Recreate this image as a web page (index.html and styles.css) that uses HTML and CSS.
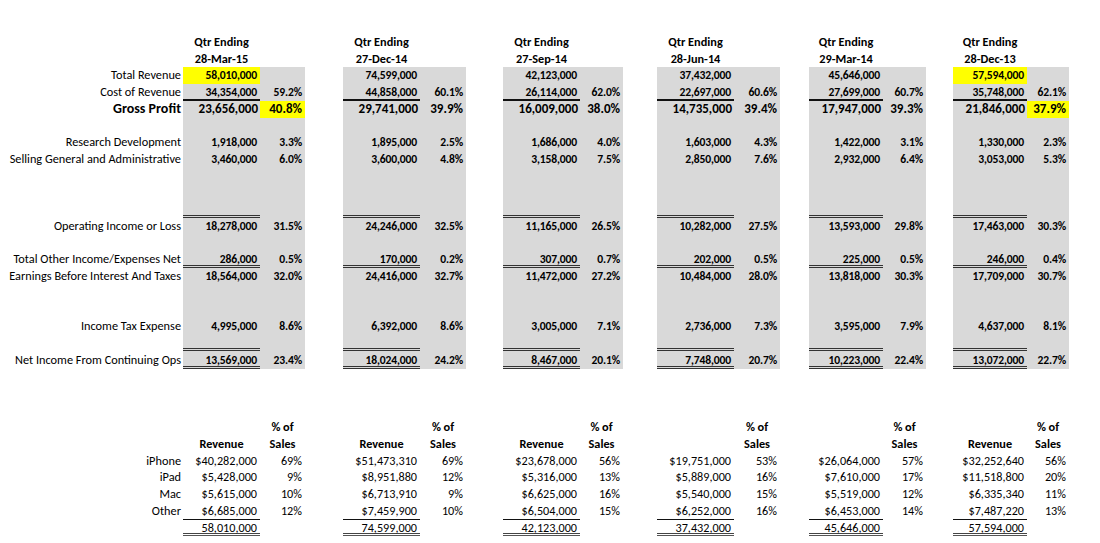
FILE: index.html
```html
<!DOCTYPE html>
<html lang="en">
<head>
<meta charset="utf-8">
<title>Quarterly Income Statement</title>
<link rel="stylesheet" href="styles.css">
</head>
<body>
<table class="sheet">
<colgroup>
<col class="c-lbl">
<col class="c-v"><col class="c-p1"><col class="c-g1">
<col class="c-v"><col class="c-p2"><col class="c-g2">
<col class="c-v"><col class="c-p3"><col class="c-g3">
<col class="c-v"><col class="c-p2"><col class="c-g4">
<col class="c-v5"><col class="c-p3"><col class="c-g5">
<col class="c-v5"><col class="c-p6">
</colgroup>
<tbody>
<tr><td></td><td class="hd">Qtr Ending</td><td></td><td></td><td class="hd">Qtr Ending</td><td></td><td></td><td class="hd">Qtr Ending</td><td></td><td></td><td class="hd">Qtr Ending</td><td></td><td></td><td class="hd">Qtr Ending</td><td></td><td></td><td class="hd">Qtr Ending</td><td></td></tr>
<tr><td></td><td class="hd">28-Mar-15</td><td></td><td></td><td class="hd">27-Dec-14</td><td></td><td></td><td class="hd">27-Sep-14</td><td></td><td></td><td class="hd">28-Jun-14</td><td></td><td></td><td class="hd">29-Mar-14</td><td></td><td></td><td class="hd">28-Dec-13</td><td></td></tr>
<tr class="s"><td class="lbl">Total Revenue</td><td class="v hl">58,010,000</td><td class="p"></td><td></td><td class="v">74,599,000</td><td class="p"></td><td></td><td class="v">42,123,000</td><td class="p"></td><td></td><td class="v">37,432,000</td><td class="p"></td><td></td><td class="v">45,646,000</td><td class="p"></td><td></td><td class="v hl">57,594,000</td><td class="p"></td></tr>
<tr class="s"><td class="lbl">Cost of Revenue</td><td class="v ul">34,354,000</td><td class="p">59.2%</td><td></td><td class="v ul">44,858,000</td><td class="p">60.1%</td><td></td><td class="v ul">26,114,000</td><td class="p">62.0%</td><td></td><td class="v ul">22,697,000</td><td class="p">60.6%</td><td></td><td class="v ul">27,699,000</td><td class="p">60.7%</td><td></td><td class="v ul">35,748,000</td><td class="p">62.1%</td></tr>
<tr class="s big"><td class="lbl">Gross Profit</td><td class="v">23,656,000</td><td class="p hl">40.8%</td><td></td><td class="v">29,741,000</td><td class="p">39.9%</td><td></td><td class="v">16,009,000</td><td class="p">38.0%</td><td></td><td class="v">14,735,000</td><td class="p">39.4%</td><td></td><td class="v">17,947,000</td><td class="p">39.3%</td><td></td><td class="v">21,846,000</td><td class="p hl">37.9%</td></tr>
<tr class="s"><td class="lbl"></td><td class="v"></td><td class="p"></td><td></td><td class="v"></td><td class="p"></td><td></td><td class="v"></td><td class="p"></td><td></td><td class="v"></td><td class="p"></td><td></td><td class="v"></td><td class="p"></td><td></td><td class="v"></td><td class="p"></td></tr>
<tr class="s"><td class="lbl">Research Development</td><td class="v">1,918,000</td><td class="p">3.3%</td><td></td><td class="v">1,895,000</td><td class="p">2.5%</td><td></td><td class="v">1,686,000</td><td class="p">4.0%</td><td></td><td class="v">1,603,000</td><td class="p">4.3%</td><td></td><td class="v">1,422,000</td><td class="p">3.1%</td><td></td><td class="v">1,330,000</td><td class="p">2.3%</td></tr>
<tr class="s"><td class="lbl">Selling General and Administrative</td><td class="v">3,460,000</td><td class="p">6.0%</td><td></td><td class="v">3,600,000</td><td class="p">4.8%</td><td></td><td class="v">3,158,000</td><td class="p">7.5%</td><td></td><td class="v">2,850,000</td><td class="p">7.6%</td><td></td><td class="v">2,932,000</td><td class="p">6.4%</td><td></td><td class="v">3,053,000</td><td class="p">5.3%</td></tr>
<tr class="s"><td class="lbl"></td><td class="v"></td><td class="p"></td><td></td><td class="v"></td><td class="p"></td><td></td><td class="v"></td><td class="p"></td><td></td><td class="v"></td><td class="p"></td><td></td><td class="v"></td><td class="p"></td><td></td><td class="v"></td><td class="p"></td></tr>
<tr class="s"><td class="lbl"></td><td class="v"></td><td class="p"></td><td></td><td class="v"></td><td class="p"></td><td></td><td class="v"></td><td class="p"></td><td></td><td class="v"></td><td class="p"></td><td></td><td class="v"></td><td class="p"></td><td></td><td class="v"></td><td class="p"></td></tr>
<tr class="s"><td class="lbl"></td><td class="v dbl"></td><td class="p"></td><td></td><td class="v dbl"></td><td class="p"></td><td></td><td class="v dbl"></td><td class="p"></td><td></td><td class="v dbl"></td><td class="p"></td><td></td><td class="v dbl"></td><td class="p"></td><td></td><td class="v dbl"></td><td class="p"></td></tr>
<tr class="s"><td class="lbl">Operating Income or Loss</td><td class="v">18,278,000</td><td class="p">31.5%</td><td></td><td class="v">24,246,000</td><td class="p">32.5%</td><td></td><td class="v">11,165,000</td><td class="p">26.5%</td><td></td><td class="v">10,282,000</td><td class="p">27.5%</td><td></td><td class="v">13,593,000</td><td class="p">29.8%</td><td></td><td class="v">17,463,000</td><td class="p">30.3%</td></tr>
<tr class="s"><td class="lbl"></td><td class="v"></td><td class="p"></td><td></td><td class="v"></td><td class="p"></td><td></td><td class="v"></td><td class="p"></td><td></td><td class="v"></td><td class="p"></td><td></td><td class="v"></td><td class="p"></td><td></td><td class="v"></td><td class="p"></td></tr>
<tr class="s"><td class="lbl">Total Other Income/Expenses Net</td><td class="v dbl">286,000</td><td class="p">0.5%</td><td></td><td class="v dbl">170,000</td><td class="p">0.2%</td><td></td><td class="v dbl">307,000</td><td class="p">0.7%</td><td></td><td class="v dbl">202,000</td><td class="p">0.5%</td><td></td><td class="v dbl">225,000</td><td class="p">0.5%</td><td></td><td class="v dbl">246,000</td><td class="p">0.4%</td></tr>
<tr class="s"><td class="lbl">Earnings Before Interest And Taxes</td><td class="v">18,564,000</td><td class="p">32.0%</td><td></td><td class="v">24,416,000</td><td class="p">32.7%</td><td></td><td class="v">11,472,000</td><td class="p">27.2%</td><td></td><td class="v">10,484,000</td><td class="p">28.0%</td><td></td><td class="v">13,818,000</td><td class="p">30.3%</td><td></td><td class="v">17,709,000</td><td class="p">30.7%</td></tr>
<tr class="s"><td class="lbl"></td><td class="v"></td><td class="p"></td><td></td><td class="v"></td><td class="p"></td><td></td><td class="v"></td><td class="p"></td><td></td><td class="v"></td><td class="p"></td><td></td><td class="v"></td><td class="p"></td><td></td><td class="v"></td><td class="p"></td></tr>
<tr class="s"><td class="lbl"></td><td class="v"></td><td class="p"></td><td></td><td class="v"></td><td class="p"></td><td></td><td class="v"></td><td class="p"></td><td></td><td class="v"></td><td class="p"></td><td></td><td class="v"></td><td class="p"></td><td></td><td class="v"></td><td class="p"></td></tr>
<tr class="s"><td class="lbl">Income Tax Expense</td><td class="v">4,995,000</td><td class="p">8.6%</td><td></td><td class="v">6,392,000</td><td class="p">8.6%</td><td></td><td class="v">3,005,000</td><td class="p">7.1%</td><td></td><td class="v">2,736,000</td><td class="p">7.3%</td><td></td><td class="v">3,595,000</td><td class="p">7.9%</td><td></td><td class="v">4,637,000</td><td class="p">8.1%</td></tr>
<tr class="s"><td class="lbl"></td><td class="v dbl"></td><td class="p"></td><td></td><td class="v dbl"></td><td class="p"></td><td></td><td class="v dbl"></td><td class="p"></td><td></td><td class="v dbl"></td><td class="p"></td><td></td><td class="v dbl"></td><td class="p"></td><td></td><td class="v dbl"></td><td class="p"></td></tr>
<tr class="s last"><td class="lbl">Net Income From Continuing Ops</td><td class="v dbl">13,569,000</td><td class="p">23.4%</td><td></td><td class="v dbl">18,024,000</td><td class="p">24.2%</td><td></td><td class="v dbl">8,467,000</td><td class="p">20.1%</td><td></td><td class="v dbl">7,748,000</td><td class="p">20.7%</td><td></td><td class="v dbl">10,223,000</td><td class="p">22.4%</td><td></td><td class="v dbl">13,072,000</td><td class="p">22.7%</td></tr>
<tr><td colspan="18"></td></tr>
<tr><td colspan="18"></td></tr>
<tr><td colspan="18"></td></tr>
<tr class="sub"><td></td><td></td><td class="hd">% of</td><td></td><td></td><td class="hd">% of</td><td></td><td></td><td class="hd">% of</td><td></td><td></td><td class="hd">% of</td><td></td><td></td><td class="hd">% of</td><td></td><td></td><td class="hd">% of</td></tr>
<tr class="sub"><td></td><td class="hd">Revenue</td><td class="hd">Sales</td><td></td><td class="hd">Revenue</td><td class="hd">Sales</td><td></td><td class="hd">Revenue</td><td class="hd">Sales</td><td></td><td></td><td class="hd">Sales</td><td></td><td></td><td class="hd">Sales</td><td></td><td class="hd">Revenue</td><td class="hd">Sales</td></tr>
<tr class="sub"><td class="lbl">iPhone</td><td class="v">$40,282,000</td><td class="p">69%</td><td></td><td class="v">$51,473,310</td><td class="p">69%</td><td></td><td class="v">$23,678,000</td><td class="p">56%</td><td></td><td class="v">$19,751,000</td><td class="p">53%</td><td></td><td class="v">$26,064,000</td><td class="p">57%</td><td></td><td class="v">$32,252,640</td><td class="p">56%</td></tr>
<tr class="sub"><td class="lbl">iPad</td><td class="v">$5,428,000</td><td class="p">9%</td><td></td><td class="v">$8,951,880</td><td class="p">12%</td><td></td><td class="v">$5,316,000</td><td class="p">13%</td><td></td><td class="v">$5,889,000</td><td class="p">16%</td><td></td><td class="v">$7,610,000</td><td class="p">17%</td><td></td><td class="v">$11,518,800</td><td class="p">20%</td></tr>
<tr class="sub"><td class="lbl">Mac</td><td class="v">$5,615,000</td><td class="p">10%</td><td></td><td class="v">$6,713,910</td><td class="p">9%</td><td></td><td class="v">$6,625,000</td><td class="p">16%</td><td></td><td class="v">$5,540,000</td><td class="p">15%</td><td></td><td class="v">$5,519,000</td><td class="p">12%</td><td></td><td class="v">$6,335,340</td><td class="p">11%</td></tr>
<tr class="sub"><td class="lbl">Other</td><td class="v ul1">$6,685,000</td><td class="p">12%</td><td></td><td class="v ul1">$7,459,900</td><td class="p">10%</td><td></td><td class="v ul1">$6,504,000</td><td class="p">15%</td><td></td><td class="v ul1">$6,252,000</td><td class="p">16%</td><td></td><td class="v ul1">$6,453,000</td><td class="p">14%</td><td></td><td class="v ul1">$7,487,220</td><td class="p">13%</td></tr>
<tr class="sub"><td class="lbl"></td><td class="v dblw">58,010,000</td><td class="p"></td><td></td><td class="v dblw">74,599,000</td><td class="p"></td><td></td><td class="v dblw">42,123,000</td><td class="p"></td><td></td><td class="v dblw">37,432,000</td><td class="p"></td><td></td><td class="v dblw">45,646,000</td><td class="p"></td><td></td><td class="v dblw">57,594,000</td><td class="p"></td></tr>
</tbody>
</table>
</body>
</html>
```
FILE: styles.css
```css
html, body {
  margin: 0;
  padding: 0;
  background: #ffffff;
}

body {
  font-family: Carlito, Calibri, Lato, "Liberation Sans", sans-serif;
  font-size: 12.3px;
  color: #000;
}

.sheet {
  margin-top: 34px;
  table-layout: fixed;
  border-collapse: collapse;
  border-spacing: 0;
  width: 1069px;
}

.c-lbl { width: 183px; }
.c-v { width: 77px; }
.c-v5 { width: 74px; }
.c-p1 { width: 45px; }
.c-p2 { width: 46px; }
.c-p3 { width: 43px; }
.c-p6 { width: 42px; }
.c-g1 { width: 38px; }
.c-g2 { width: 37px; }
.c-g3 { width: 34px; }
.c-g4 { width: 29px; }
.c-g5 { width: 27px; }

.sheet tr {
  height: 16.7px;
}

.sheet td {
  padding: 0;
  height: 16.7px;
  line-height: 16.7px;
  white-space: nowrap;
  overflow: visible;
  vertical-align: middle;
}

.lbl {
  text-align: right;
  padding-right: 2px !important;
}

.v, .p {
  text-align: right;
  padding-right: 3px !important;
  font-weight: bold;
  font-size: 11.6px;
  letter-spacing: -0.15px;
}

.hd {
  text-align: center;
  font-weight: bold;
}

.s .v, .s .p {
  background: #d9d9d9;
}

.s.last .v, .s.last .p {
  height: 18px;
}

.s .hl, .hl {
  background: #ffff00;
}

.big td {
  font-size: 13px;
  font-weight: bold;
  letter-spacing: 0;
}

.big .lbl {
  font-size: 14px;
}

.big .v {
  padding-right: 2px !important;
}

.sub .v, .sub .p {
  font-weight: normal;
  font-size: 12.2px;
  letter-spacing: 0;
}

.ul {
  box-shadow: inset 0 -2px 0 #111;
}

.ul1 {
  box-shadow: inset 0 -1px 0 #111;
}

.dbl {
  box-shadow: inset 0 -1px 0 #333, inset 0 -2px 0 #d9d9d9, inset 0 -3px 0 #333;
}

.dblw {
  box-shadow: inset 0 -1px 0 #555, inset 0 -2px 0 #ffffff, inset 0 -3px 0 #444;
}
```
